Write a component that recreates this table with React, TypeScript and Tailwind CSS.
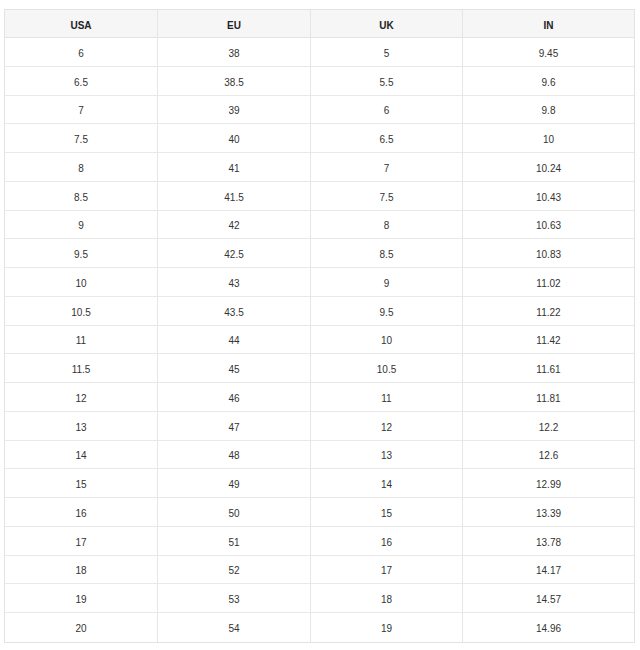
import React from 'react';

const rows: [string, string, string, string][] = [
  ['6', '38', '5', '9.45'],
  ['6.5', '38.5', '5.5', '9.6'],
  ['7', '39', '6', '9.8'],
  ['7.5', '40', '6.5', '10'],
  ['8', '41', '7', '10.24'],
  ['8.5', '41.5', '7.5', '10.43'],
  ['9', '42', '8', '10.63'],
  ['9.5', '42.5', '8.5', '10.83'],
  ['10', '43', '9', '11.02'],
  ['10.5', '43.5', '9.5', '11.22'],
  ['11', '44', '10', '11.42'],
  ['11.5', '45', '10.5', '11.61'],
  ['12', '46', '11', '11.81'],
  ['13', '47', '12', '12.2'],
  ['14', '48', '13', '12.6'],
  ['15', '49', '14', '12.99'],
  ['16', '50', '15', '13.39'],
  ['17', '51', '16', '13.78'],
  ['18', '52', '17', '14.17'],
  ['19', '53', '18', '14.57'],
  ['20', '54', '19', '14.96'],
];

const headers = ['USA', 'EU', 'UK', 'IN'];

const Cell: React.FC<{ children: React.ReactNode; last: boolean; head?: boolean }> = ({ children, last, head }) => (
  <div
    className={`flex items-center justify-center pt-[3px] ${last ? '' : 'border-r border-[#e6e6e6]'} ${
      head ? 'font-bold text-[#222]' : 'text-[#333]'
    }`}
  >
    {children}
  </div>
);

export default function App() {
  return (
    <div className="w-[640px] h-[650px] bg-white pt-[9px] pl-[4px] font-['Liberation_Sans',Arial,sans-serif] text-[10px]">
      <div className="w-[631px] border border-[#e3e3e3]">
        <div className="grid grid-cols-[153px_153px_152px_1fr] h-[28px] bg-[#f6f6f6] border-b border-[#e3e3e3]">
          {headers.map((h, i) => (
            <Cell key={h} last={i === 3} head>
              {h}
            </Cell>
          ))}
        </div>
        {rows.map((r, ri) => (
          <div
            key={ri}
            className={`grid grid-cols-[153px_153px_152px_1fr] h-[28.76px] ${
              ri === rows.length - 1 ? '' : 'border-b border-[#e8e8e8]'
            }`}
          >
            {r.map((v, i) => (
              <Cell key={i} last={i === 3}>
                {v}
              </Cell>
            ))}
          </div>
        ))}
      </div>
    </div>
  );
}
